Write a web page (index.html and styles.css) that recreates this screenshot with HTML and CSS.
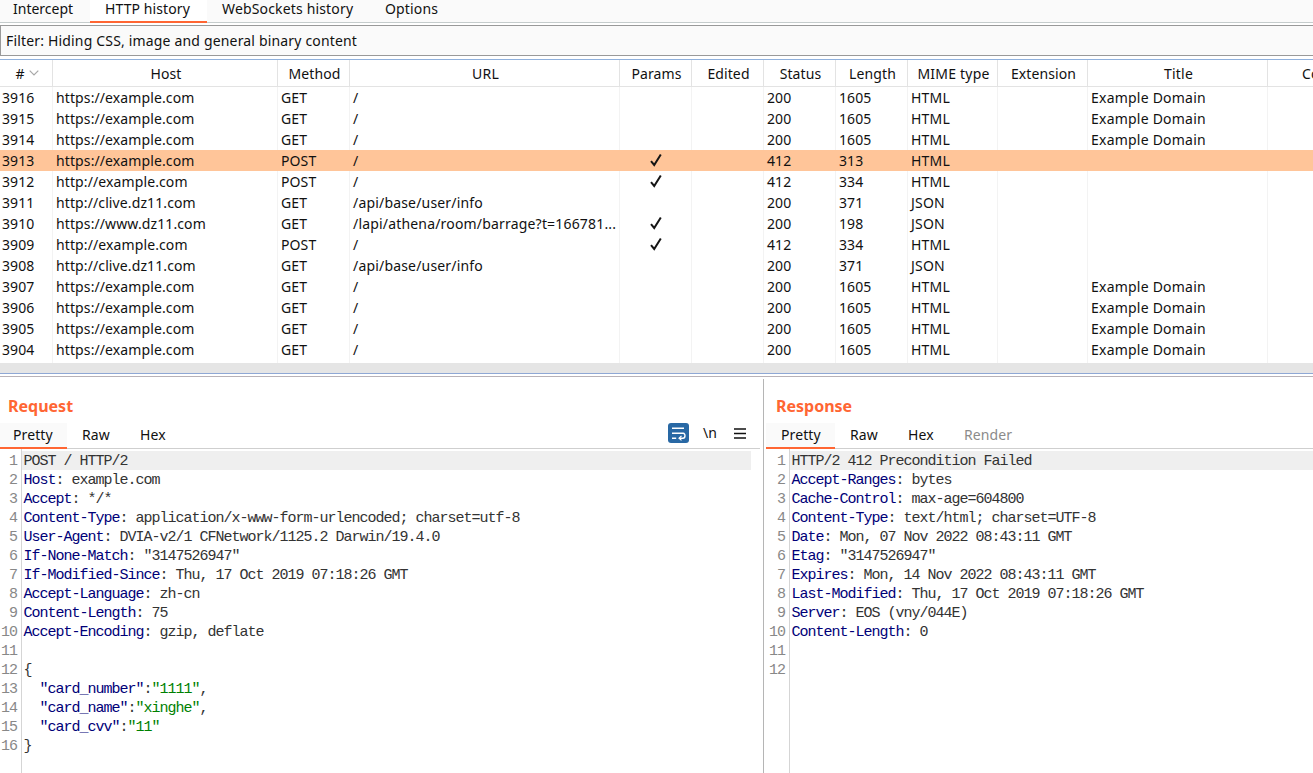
FILE: index.html
```html
<!DOCTYPE html>
<html lang="en">
<head>
<meta charset="utf-8">
<title>HTTP history</title>
<link rel="stylesheet" href="styles.css">
</head>
<body>
<svg width="0" height="0" class="defs"><symbol id="check" viewBox="0 0 12 14"><path d="M1 8.2 L4.2 12 L10.8 1.5" fill="none" stroke="#151515" stroke-width="2"/></symbol></svg>
<nav class="tabs">
<div class="tab t1"><span>Intercept</span></div><div class="tab t2 active"><span>HTTP history</span></div><div class="tab t3"><span>WebSockets history</span></div><div class="tab t4"><span>Options</span></div>
</nav>
<div class="filter"><span>Filter: Hiding CSS, image and general binary content</span></div>
<section class="table">
<div class="row head"><div class="num"><span>#</span><svg width="10" height="6" viewBox="0 0 10 6"><path d="M.7 .7 L5 5 L9.3 .7" fill="none" stroke="#a8a8a8" stroke-width="1.2"/></svg></div><div>Host</div><div>Method</div><div>URL</div><div>Params</div><div>Edited</div><div>Status</div><div>Length</div><div>MIME type</div><div>Extension</div><div>Title</div><div class="last">Comment</div></div>
<div class="row"><div>3916</div><div>https://example.com</div><div>GET</div><div>/</div><div></div><div></div><div>200</div><div>1605</div><div>HTML</div><div></div><div>Example Domain</div><div></div></div>
<div class="row"><div>3915</div><div>https://example.com</div><div>GET</div><div>/</div><div></div><div></div><div>200</div><div>1605</div><div>HTML</div><div></div><div>Example Domain</div><div></div></div>
<div class="row"><div>3914</div><div>https://example.com</div><div>GET</div><div>/</div><div></div><div></div><div>200</div><div>1605</div><div>HTML</div><div></div><div>Example Domain</div><div></div></div>
<div class="row selected"><div>3913</div><div>https://example.com</div><div>POST</div><div>/</div><div class="ck"><svg><use href="#check"/></svg></div><div></div><div>412</div><div>313</div><div>HTML</div><div></div><div></div><div></div></div>
<div class="row"><div>3912</div><div>http://example.com</div><div>POST</div><div>/</div><div class="ck"><svg><use href="#check"/></svg></div><div></div><div>412</div><div>334</div><div>HTML</div><div></div><div></div><div></div></div>
<div class="row"><div>3911</div><div>http://clive.dz11.com</div><div>GET</div><div>/api/base/user/info</div><div></div><div></div><div>200</div><div>371</div><div>JSON</div><div></div><div></div><div></div></div>
<div class="row"><div>3910</div><div>https://www.dz11.com</div><div>GET</div><div>/lapi/athena/room/barrage?t=166781...</div><div class="ck"><svg><use href="#check"/></svg></div><div></div><div>200</div><div>198</div><div>JSON</div><div></div><div></div><div></div></div>
<div class="row"><div>3909</div><div>http://example.com</div><div>POST</div><div>/</div><div class="ck"><svg><use href="#check"/></svg></div><div></div><div>412</div><div>334</div><div>HTML</div><div></div><div></div><div></div></div>
<div class="row"><div>3908</div><div>http://clive.dz11.com</div><div>GET</div><div>/api/base/user/info</div><div></div><div></div><div>200</div><div>371</div><div>JSON</div><div></div><div></div><div></div></div>
<div class="row"><div>3907</div><div>https://example.com</div><div>GET</div><div>/</div><div></div><div></div><div>200</div><div>1605</div><div>HTML</div><div></div><div>Example Domain</div><div></div></div>
<div class="row"><div>3906</div><div>https://example.com</div><div>GET</div><div>/</div><div></div><div></div><div>200</div><div>1605</div><div>HTML</div><div></div><div>Example Domain</div><div></div></div>
<div class="row"><div>3905</div><div>https://example.com</div><div>GET</div><div>/</div><div></div><div></div><div>200</div><div>1605</div><div>HTML</div><div></div><div>Example Domain</div><div></div></div>
<div class="row"><div>3904</div><div>https://example.com</div><div>GET</div><div>/</div><div></div><div></div><div>200</div><div>1605</div><div>HTML</div><div></div><div>Example Domain</div><div></div></div>
<div class="row rest"><div></div><div></div><div></div><div></div><div></div><div></div><div></div><div></div><div></div><div></div><div></div><div></div></div>
</section>
<div class="splitter"></div>
<main class="panes">
<section class="pane request">
<h2>Request</h2>
<div class="ptabs"><div class="ptab active">Pretty</div><div class="ptab raw">Raw</div><div class="ptab hex">Hex</div>
<div class="tools">
<svg width="21" height="20" viewBox="0 0 21 20"><rect width="21" height="20" rx="3" fill="#2868a4"/><g fill="none" stroke="#fff" stroke-width="1.4"><path d="M4 5.3H16M4 10.3H15.2C17.6 10.3 17.6 15.3 15 15.3H11.5M4 15.3H8.2"/><path d="M13.5 12.8L11 15.3L13.5 17.4" stroke-width="1.2"/></g></svg>
<span class="nl">\n</span>
<svg width="12" height="11" viewBox="0 0 12 11"><path d="M0 1H12M0 5.5H12M0 10H12" stroke="#111" stroke-width="1.6"/></svg>
</div></div>
<div class="editor">
<div class="gutter"><pre>1
2
3
4
5
6
7
8
9
10
11
12
13
14
15
16</pre></div>
<div class="code"><pre class="first">POST / HTTP/2</pre><pre><b>Host</b>: example.com
<b>Accept</b>: */*
<b>Content-Type</b>: application/x-www-form-urlencoded; charset=utf-8
<b>User-Agent</b>: DVIA-v2/1 CFNetwork/1125.2 Darwin/19.4.0
<b>If-None-Match</b>: "3147526947"
<b>If-Modified-Since</b>: Thu, 17 Oct 2019 07:18:26 GMT
<b>Accept-Language</b>: zh-cn
<b>Content-Length</b>: 75
<b>Accept-Encoding</b>: gzip, deflate

{
  <b>"card_number"</b>:<i>"1111"</i>,
  <b>"card_name"</b>:<i>"xinghe"</i>,
  <b>"card_cvv"</b>:<i>"11"</i>
}</pre></div>
</div>
</section>
<section class="pane response">
<h2>Response</h2>
<div class="ptabs"><div class="ptab active">Pretty</div><div class="ptab raw">Raw</div><div class="ptab hex">Hex</div><div class="ptab render">Render</div></div>
<div class="editor">
<div class="gutter"><pre>1
2
3
4
5
6
7
8
9
10
11
12</pre></div>
<div class="code"><pre class="first">HTTP/2 412 Precondition Failed</pre><pre><b>Accept-Ranges</b>: bytes
<b>Cache-Control</b>: max-age=604800
<b>Content-Type</b>: text/html; charset=UTF-8
<b>Date</b>: Mon, 07 Nov 2022 08:43:11 GMT
<b>Etag</b>: "3147526947"
<b>Expires</b>: Mon, 14 Nov 2022 08:43:11 GMT
<b>Last-Modified</b>: Thu, 17 Oct 2019 07:18:26 GMT
<b>Server</b>: EOS (vny/044E)
<b>Content-Length</b>: 0</pre></div>
</div>
</section>
</main>
</body>
</html>
```
FILE: styles.css
```css
* { box-sizing: border-box; }
body { margin: 0; width: 1313px; height: 773px; overflow: hidden; background: #fff; color: #111; font: 14px/20px "Noto Sans", "Open Sans", sans-serif; display: flex; flex-direction: column; }
.defs { display: none; }
.tabs { height: 23px; flex: none; display: flex; background: #fafafa; border-bottom: 1px solid #c5cccc; }
.tab { height: 23px; padding-left: 13px; line-height: 18px; white-space: nowrap; border-bottom: 2px solid transparent; }
.t1 { width: 90px; }
.t2 { width: 117px; padding-left: 15px; letter-spacing: .1px; }
.t3 { width: 163px; padding-left: 15px; letter-spacing: .16px; }
.t4 { padding-left: 15px; letter-spacing: .16px; }
.tabs .active { background: #fff; border-color: #ff6633; }
.filter { height: 31px; flex: none; margin-top: 2px; padding-left: 5px; line-height: 29px; letter-spacing: .17px; background: #fafafa; border: 1px solid #999; border-right: 0; white-space: nowrap; }
.table { height: 304px; flex: none; margin-top: 3px; border-top: 1px solid #8fb0dc; overflow: hidden; letter-spacing: .11px; }
.row { display: grid; grid-template-columns: 53px 225px 72px 270px 72px 72px 72px 72px 90px 90px 180px 45px; height: 21px; line-height: 21px; }
.row > div { border-right: 1px solid #f3f3f3; padding-left: 3px; white-space: nowrap; overflow: hidden; }
.row > div:first-child { padding-left: 2px; }
.row > div:nth-child(4) { letter-spacing: .18px; }
.row > div:nth-child(9), .row > div:nth-child(11) { letter-spacing: .22px; }
.row > div:last-child { border-right: 0; }
.head { height: 27px; line-height: 27px; border-bottom: 1px solid #e3e3e3; text-align: center; }
.head > div { border-color: #e3e3e3; padding-left: 2px; }
.head .num { display: flex; align-items: center; justify-content: center; gap: 4px; }
.head > .last { padding-left: 34px; text-align: left; }
.selected { background: #ffc599; }
.selected > div { border-color: #ffc599; }
.row > .ck { padding-left: 1px; }
.ck svg { display: block; width: 12px; height: 14px; margin: 3px auto 0; }
.rest { height: 3px; }
.splitter { height: 14px; flex: none; background: linear-gradient(#e5e5e5 10px, #8fa8d5 10px, #8fa8d5 11px, #fff 11px, #fff 13px, #b8b2b8 13px); }
.panes { flex: 1; display: flex; padding-top: 2px; }
.pane { display: flex; flex-direction: column; }
.request { width: 764px; padding-right: 3px; border-right: 1px solid #b5b5b5; }
.response { width: 549px; padding-left: 2px; }
h2 { margin: 0; height: 44px; padding: 17px 0 0 8px; font-size: 16px; line-height: 20px; color: #ff6633; }
.response h2 { padding-left: 10px; }
.ptabs { display: flex; height: 26px; border-bottom: 1px solid #cfcfcf; line-height: 23px; letter-spacing: .1px; }
.ptab { height: 26px; padding-left: 15px; }
.ptabs .active { width: 67px; padding-left: 13px; background: #fafafa; border-bottom: 2px solid #ff6633; }
.response .active { width: 69px; padding-left: 15px; }
.raw { width: 58px; }
.hex { width: 56px; }
.render { color: #8b8b8b; }
.tools { display: flex; align-items: center; height: 20px; margin-left: auto; padding-right: 14px; }
.nl { margin: 0 17px 0 14px; line-height: 20px; }
.editor { flex: 1; display: flex; padding-right: 9px; }
.gutter { width: 22px; padding-top: 3px; border-right: 1px solid #d5d5d5; color: #888; text-align: right; }
.response .gutter { width: 24px; }
.gutter pre { padding-right: 4px; }
.code { flex: 1; padding-top: 2px; color: #333; }
.response .editor { padding-right: 0; }
pre { margin: 0; font: 15px/19px "Liberation Mono", monospace; letter-spacing: -1px; }
.code pre { padding: 1px 0 0 1.5px; }
.code .first { height: 19px; background: #efefef; }
pre b { color: #000078; font-weight: 400; }
pre i { color: #008000; font-style: normal; }
```
